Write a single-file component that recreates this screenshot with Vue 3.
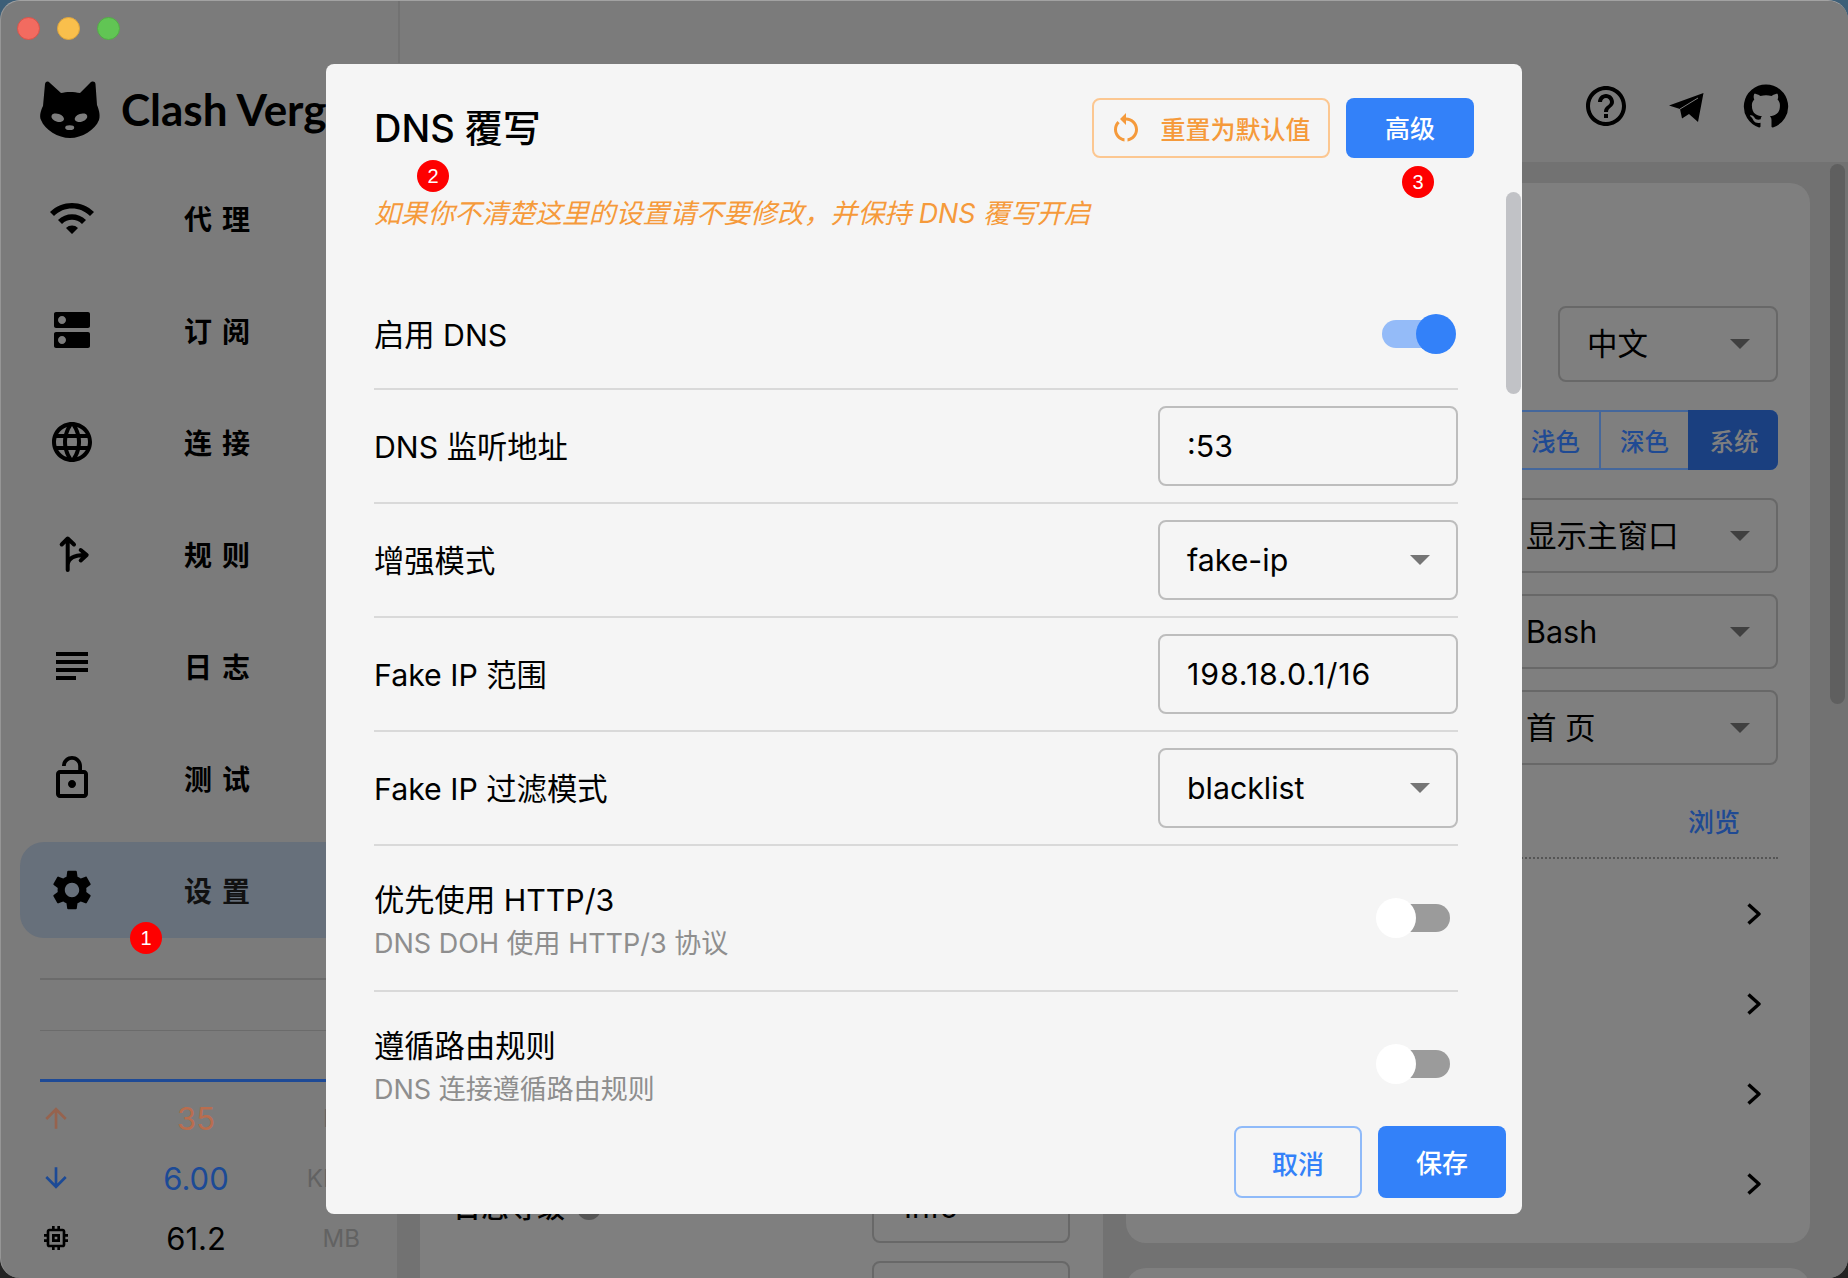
<script setup>
const navItems = [
  { label: '代理', d: 'M1 9l2 2c4.97-4.97 13.03-4.97 18 0l2-2C16.93 2.93 7.08 2.93 1 9zm8 8l3 3 3-3c-1.65-1.66-4.34-1.66-6 0zm-4-4l2 2c2.76-2.76 7.24-2.76 10 0l2-2C15.14 9.14 8.87 9.14 5 13z' },
  { label: '订阅', d: 'M20 13H4c-.55 0-1 .45-1 1v6c0 .55.45 1 1 1h16c.55 0 1-.45 1-1v-6c0-.55-.45-1-1-1zM7 19c-1.1 0-2-.9-2-2s.9-2 2-2 2 .9 2 2-.9 2-2 2zM20 3H4c-.55 0-1 .45-1 1v6c0 .55.45 1 1 1h16c.55 0 1-.45 1-1V4c0-.55-.45-1-1-1zM7 9c-1.1 0-2-.9-2-2s.9-2 2-2 2 .9 2 2-.9 2-2 2z' },
  { label: '连接', d: 'M11.99 2C6.47 2 2 6.48 2 12s4.47 10 9.99 10C17.52 22 22 17.52 22 12S17.52 2 11.99 2zm6.93 6h-2.95c-.32-1.25-.78-2.45-1.38-3.56 1.84.63 3.37 1.91 4.33 3.56zM12 4.04c.83 1.2 1.48 2.53 1.91 3.96h-3.82c.43-1.43 1.08-2.76 1.91-3.96zM4.26 14C4.1 13.36 4 12.69 4 12s.1-1.36.26-2h3.38c-.08.66-.14 1.32-.14 2 0 .68.06 1.34.14 2H4.26zm.82 2h2.95c.32 1.25.78 2.45 1.38 3.56-1.84-.63-3.37-1.9-4.33-3.56zm2.95-8H5.08c.96-1.66 2.49-2.93 4.33-3.56C8.81 5.55 8.35 6.75 8.03 8zM12 19.96c-.83-1.2-1.48-2.53-1.91-3.96h3.82c-.43 1.43-1.08 2.76-1.91 3.96zM14.34 14H9.66c-.09-.66-.16-1.32-.16-2 0-.68.07-1.35.16-2h4.68c.09.65.16 1.32.16 2 0 .68-.07 1.34-.16 2zm.25 5.56c.6-1.11 1.06-2.31 1.38-3.56h2.95c-.96 1.65-2.49 2.93-4.33 3.56zM16.36 14c.08-.66.14-1.32.14-2 0-.68-.06-1.34-.14-2h3.38c.16.64.26 1.31.26 2s-.1 1.36-.26 2h-3.38z' },
  { label: '规则', rule: true },
  { label: '日志', d: 'M14 17H4v2h10v-2zm6-8H4v2h16V9zM4 15h16v-2H4v2zM4 5v2h16V5H4z' },
  { label: '测试', d: 'M12 17c1.1 0 2-.9 2-2s-.9-2-2-2-2 .9-2 2 .9 2 2 2zm6-9h-1V6c0-2.76-2.24-5-5-5S7 3.24 7 6h1.9c0-1.71 1.39-3.1 3.1-3.1 1.71 0 3.1 1.39 3.1 3.1v2H6c-1.1 0-2 .9-2 2v10c0 1.1.9 2 2 2h12c1.1 0 2-.9 2-2V10c0-1.1-.9-2-2-2zm0 12H6V10h12v10z' },
  { label: '设置', active: true, d: 'M19.14 12.94c.04-.3.06-.61.06-.94 0-.32-.02-.64-.07-.94l2.03-1.58c.18-.14.23-.41.12-.61l-1.92-3.32c-.12-.22-.37-.29-.59-.22l-2.39.96c-.5-.38-1.03-.7-1.62-.94l-.36-2.54c-.04-.24-.24-.41-.48-.41h-3.84c-.24 0-.43.17-.47.41l-.36 2.54c-.59.24-1.13.57-1.62.94l-2.39-.96c-.22-.08-.47 0-.59.22L2.74 8.87c-.12.21-.08.47.12.61l2.03 1.58c-.05.3-.09.63-.09.94s.02.64.07.94l-2.03 1.58c-.18.14-.23.41-.12.61l1.92 3.32c.12.22.37.29.59.22l2.39-.96c.5.38 1.03.7 1.62.94l.36 2.54c.05.24.24.41.48.41h3.84c.24 0 .44-.17.47-.41l.36-2.54c.59-.24 1.13-.56 1.62-.94l2.39.96c.22.08.47 0 .59-.22l1.92-3.32c.12-.22.07-.47-.12-.61l-2.01-1.58zM12 15.6c-1.98 0-3.6-1.62-3.6-3.6s1.62-3.6 3.6-3.6 3.6 1.62 3.6 3.6-1.62 3.6-3.6 3.6z' }
]

const stats = [
  { cls: 'up', value: '35', unit: 'B/s', d: 'M4 12l1.41 1.41L11 7.83V20h2V7.83l5.58 5.59L20 12l-8-8-8 8z' },
  { cls: 'down', value: '6.00', unit: 'KB/s', d: 'M20 12l-1.41-1.41L13 16.17V4h-2v12.17l-5.58-5.59L4 12l8 8 8-8z' },
  { cls: 'mem', value: '61.2', unit: 'MB', d: 'M15 9H9v6h6V9zm-2 4h-2v-2h2v2zm8-2V9h-2V7c0-1.1-.9-2-2-2h-2V3h-2v2h-2V3H9v2H7c-1.1 0-2 .9-2 2v2H3v2h2v2H3v2h2v2c0 1.1.9 2 2 2h2v2h2v-2h2v2h2v-2h2c1.1 0 2-.9 2-2v-2h2v-2h-2v-2h2zm-4 6H7V7h10v10z' }
]

const plainRows = [
  { label: 'DNS 监听地址', value: ':53', kind: 'input' },
  { label: '增强模式', value: 'fake-ip', kind: 'select' },
  { label: 'Fake IP 范围', value: '198.18.0.1/16', kind: 'input', numeric: true },
  { label: 'Fake IP 过滤模式', value: 'blacklist', kind: 'select' }
]

const toggleRows = [
  { label: '优先使用 HTTP/3', desc: 'DNS DOH 使用 HTTP/3 协议' },
  { label: '遵循路由规则', desc: 'DNS 连接遵循路由规则' }
]

const bgSelects = ['显示主窗口', 'Bash', '首 页']
const themeButtons = ['跟随', '浅色', '深色', '系统']
</script>

<template>
  <div class="desktop">
    <div class="window">
      <aside class="sidebar">
        <div class="logo">
          <svg class="cat" viewBox="0 0 80 80" width="80" height="80">
            <path d="M15 14C16 11 18 11 20 13L31 23C36 21.5 44 21.5 50 23L60 13C62 11 65 11 65.5 14L67 35C70 42 70 47 69 50C65 60 52 68 40 68C28 68 15 60 11 50C9 46 11 40 13 36Z" fill="#000" />
            <ellipse cx="27.7" cy="47.7" rx="6.5" ry="4" transform="rotate(18 27.7 47.7)" fill="#7d7d7d" />
            <ellipse cx="51" cy="47.7" rx="6.5" ry="4" transform="rotate(-18 51 47.7)" fill="#7d7d7d" />
            <ellipse cx="39.7" cy="57.7" rx="4.5" ry="2.4" fill="#7d7d7d" />
          </svg>
          <span class="brand">Clash Verge</span>
        </div>

        <nav class="nav">
          <div v-for="item in navItems" :key="item.label" class="nav-item" :class="{ active: item.active }">
            <svg v-if="item.rule" class="nav-icon" viewBox="0 0 48 48">
              <path d="M19.700 40V9M13.700 14.500L19.700 8.500L26 14.500M19.700 35C20 29 25 25 37 25M32.700 20L38.700 25L32.700 30.500" fill="none" stroke="#000" stroke-width="4" stroke-linecap="round" stroke-linejoin="round" />
            </svg>
            <svg v-else class="nav-icon" viewBox="0 0 24 24"><path :d="item.d" /></svg>
            <span class="nav-label">{{ item.label }}</span>
          </div>
        </nav>

        <div class="graph">
          <div class="graph-line"></div>
          <div class="graph-line"></div>
          <div class="graph-base"></div>
        </div>

        <div class="stats">
          <div v-for="s in stats" :key="s.unit" class="stat" :class="s.cls">
            <svg class="stat-icon" viewBox="0 0 24 24"><path :d="s.d" /></svg>
            <span class="stat-value">{{ s.value }}</span>
            <span class="stat-unit">{{ s.unit }}</span>
          </div>
        </div>
      </aside>

      <main class="main">
        <header class="topbar">
          <svg class="top-icon" viewBox="0 0 24 24"><path d="M11 18h2v-2h-2v2zm1-16C6.48 2 2 6.48 2 12s4.48 10 10 10 10-4.48 10-10S17.52 2 12 2zm0 18c-4.41 0-8-3.59-8-8s3.59-8 8-8 8 3.59 8 8-3.59 8-8 8zm0-14c-2.21 0-4 1.790-4 4h2c0-1.100.9-2 2-2s2 .9 2 2c0 2-3 1.750-3 5h2c0-2.250 3-2.500 3-5 0-2.210-1.790-4-4-4z" /></svg>
          <svg class="top-icon" viewBox="92 11 48 48"><path d="M133.500 22L99 34.500L110 38L112 47.500L119 43L128 51Z" /><path d="M110 38L128 27" stroke="#7d7d7d" stroke-width="1" /></svg>
          <svg class="top-icon" viewBox="0 0 24 24"><path d="M12 1.270a11 11 0 00-3.480 21.460c.55.09.73-.28.73-.55v-1.840c-3.030.64-3.670-1.460-3.670-1.460-.55-1.290-1.280-1.650-1.280-1.650-.92-.65.1-.65.1-.65 1.100 0 1.730 1.100 1.730 1.100.92 1.650 2.570 1.200 3.210.92a2 2 0 01.64-1.470c-2.470-.27-5.040-1.190-5.040-5.500 0-1.100.46-2.100 1.200-2.840a3.760 3.760 0 010-2.930s.91-.28 3.110 1.100c1.800-.49 3.700-.49 5.500 0 2.100-1.380 3.020-1.100 3.020-1.100a3.760 3.760 0 010 2.930c.83.74 1.200 1.740 1.200 2.940 0 4.210-2.570 5.130-5.040 5.400.45.37.82.92.82 2.020v3.030c0 .27.1.64.73.55A11 11 0 0012 1.270" /></svg>
        </header>

        <div class="content">
          <section class="card card-left">
            <div class="bg-row">
              <span class="bg-row-label">日志等级</span>
              <span class="bg-help"></span>
              <span class="bg-select-left">Info</span>
            </div>
            <div class="bg-row bg-row-next"><span class="bg-select-left"></span></div>
          </section>

          <div class="right-col">
            <section class="card card-right">
              <div class="bg-select lang">中文<i class="caret dark"></i></div>
              <div class="theme-group">
                <span v-for="(t, i) in themeButtons" :key="t" class="theme-btn" :class="{ on: i === 3 }">{{ t }}</span>
              </div>
              <div v-for="s in bgSelects" :key="s" class="bg-select wide">{{ s }}<i class="caret dark"></i></div>
              <span class="browse">浏览</span>
              <div class="dotted"></div>
              <div v-for="n in 4" :key="n" class="chevron-row">
                <svg width="14" height="24" viewBox="0 0 14 24"><path d="M1.500 2.500L12 12L1.500 21.500" fill="none" stroke="#000" stroke-width="3.400" stroke-linejoin="round" /></svg>
              </div>
            </section>
            <section class="card card-next"></section>
          </div>
        </div>
      </main>

      <div class="scroll-thumb"></div>

      <div class="dialog">
        <div class="dialog-head">
          <h2 class="dialog-title">DNS 覆写</h2>
          <div class="head-actions">
            <button class="btn btn-reset">
              <svg class="reset-icon" viewBox="0 0 24 24"><path d="M12 5V2L8 6l4 4V7c3.310 0 6 2.690 6 6 0 2.970-2.160 5.430-5 5.910v2.020c3.950-.49 7-3.850 7-7.930 0-4.420-3.580-8-8-8zm-6 8c0-1.650.67-3.150 1.760-4.240L6.340 7.340C4.900 8.790 4 10.790 4 13c0 4.080 3.050 7.440 7 7.930v-2.020c-2.840-.48-5-2.940-5-5.910z" /></svg>
              重置为默认值
            </button>
            <button class="btn btn-primary btn-adv">高级</button>
          </div>
        </div>
        <p class="hint">如果你不清楚这里的设置请不要修改，并保持 DNS 覆写开启</p>

        <div class="dialog-body">
          <div class="row row-first">
            <span class="row-label">启用 DNS</span>
            <span class="switch on"><i class="track"></i><i class="knob"></i></span>
          </div>
          <div v-for="r in plainRows" :key="r.label" class="row">
            <span class="row-label">{{ r.label }}</span>
            <div class="field" :class="{ numeric: r.numeric }">
              {{ r.value }}
              <i v-if="r.kind === 'select'" class="caret"></i>
            </div>
          </div>
          <div v-for="r in toggleRows" :key="r.label" class="row row-tall">
            <div class="row-text">
              <div class="row-label">{{ r.label }}</div>
              <div class="row-desc">{{ r.desc }}</div>
            </div>
            <span class="switch"><i class="track"></i><i class="knob"></i></span>
          </div>
        </div>

        <div class="dialog-foot">
          <button class="btn btn-cancel">取消</button>
          <button class="btn btn-primary btn-save">保存</button>
        </div>

        <div class="dialog-thumb"></div>
      </div>

      <div class="lights">
        <i class="light red"></i>
        <i class="light yellow"></i>
        <i class="light green"></i>
      </div>

      <span class="badge b1">1</span>
      <span class="badge b2">2</span>
      <span class="badge b3">3</span>
    </div>
  </div>
</template>

<style>
html, body { margin: 0; padding: 0; overflow: hidden; }
</style>

<style scoped>
.desktop {
  width: 1848px;
  height: 1278px;
  background: linear-gradient(180deg, #3d5f78 0%, #3d5f78 50%, #232323 50%, #232323 100%);
  font-family: Inter, "Noto Sans CJK SC", sans-serif;
  color: #000;
}
.window {
  position: relative;
  width: 1848px;
  height: 1278px;
  display: flex;
  overflow: hidden;
  border-radius: 20px;
  background: #7b7b7b;
  box-sizing: border-box;
  border-top: 1px solid #a2a2a2;
  border-left: 1px solid #969696;
}

/* sidebar */
.sidebar {
  width: 396px;
  flex: none;
  overflow: hidden;
  box-sizing: border-box;
}
.logo {
  display: flex;
  align-items: center;
  height: 80px;
  margin-top: 69px;
  padding-left: 29px;
  gap: 11px;
}
.cat { flex: none; }
.brand {
  font-family: Lato, sans-serif;
  font-weight: 700;
  font-size: 44px;
  line-height: 74px;
  height: 76px;
  white-space: nowrap;
}
.nav {
  display: flex;
  flex-direction: column;
  gap: 16px;
  margin-top: 20px;
  padding-left: 19px;
}
.nav-item {
  display: flex;
  align-items: center;
  height: 96px;
  padding-left: 28px;
  border-radius: 24px;
}
.nav-item.active { background: #67707b; }
.nav-icon { width: 48px; height: 48px; flex: none; }
.nav-label {
  margin-left: 88px;
  font-size: 28px;
  font-weight: 700;
  letter-spacing: 10px;
  color: #000;
}
.nav-item.active .nav-label { color: #111; }
.graph {
  margin: 40px 0 0 39px;
  height: 104px;
  display: flex;
  flex-direction: column;
  justify-content: flex-start;
}
.graph-line { height: 2px; background: #6b6b6b; margin-bottom: 50px; }
.graph-base { height: 3px; background: #1e4a96; margin-top: -2px; }
.stats {
  padding-left: 39px;
  margin-top: 6px;
}
.stat {
  display: grid;
  grid-template-columns: 32px 248px 40px;
  align-items: center;
  height: 60px;
}
.stat-icon { width: 32px; height: 32px; fill: currentColor; }
.stat-value { text-align: center; font-size: 31px; }
.stat-unit {
  display: flex;
  justify-content: flex-end;
  white-space: nowrap;
  font-size: 24px;
  color: #626262;
}
.up { color: #96634e; }
.up .stat-value { color: #b96d4e; }
.down { color: #1c4a96; }
.mem { color: #000; }

/* main */
.main {
  flex: 1;
  min-width: 0;
  display: flex;
  flex-direction: column;
  position: relative;
}
.main::before {
  content: "";
  position: absolute;
  left: 1px;
  top: 0;
  width: 2px;
  height: 62px;
  background: #727272;
}
.topbar {
  height: 161px;
  flex: none;
  box-sizing: border-box;
  display: flex;
  justify-content: flex-end;
  align-items: flex-start;
  gap: 32px;
  padding: 81px 58px 0 0;
  background: #7b7b7b;
}
.top-icon { width: 48px; height: 48px; fill: #000; }
.content {
  flex: 1;
  min-height: 0;
  background: #727272;
  display: flex;
  gap: 23px;
  padding: 21px 0 0 23px;
  overflow: hidden;
}
.card {
  background: #7f7f7f;
  border-radius: 20px;
  box-sizing: border-box;
}
.card-left {
  width: 683px;
  height: 1200px;
  padding: 983px 33px 0 33px;
  flex: none;
}
.bg-row {
  display: flex;
  align-items: center;
  gap: 12px;
  height: 76px;
  margin-bottom: 20px;
}
.bg-row-label { font-size: 28px; font-weight: 500; padding-top: 4px; }
.bg-help { width: 24px; height: 24px; margin-top: 8px; border-radius: 50%; background: #555; }
.bg-select-left {
  box-sizing: border-box;
  width: 198px;
  height: 78px;
  margin-left: auto;
  border: 2px solid #686868;
  border-radius: 8px;
  padding: 22px 30px 0;
  font-size: 30px;
}
.right-col {
  width: 684px;
  flex: none;
  display: flex;
  flex-direction: column;
  gap: 25px;
}
.card-right {
  height: 1060px;
  flex: none;
  padding: 123px 32px 0 33px;
  display: flex;
  flex-direction: column;
  align-items: flex-end;
}
.card-next { height: 200px; flex: none; }
.bg-select {
  position: relative;
  box-sizing: border-box;
  display: flex;
  align-items: center;
  height: 75px;
  border: 2px solid #686868;
  border-radius: 8px;
  font-size: 30.500px;
  padding-left: 27px;
  line-height: 1;
}
.lang { width: 220px; height: 76px; }
.wide { width: 278px; margin-top: 21px; padding-left: 24px; padding-top: 2px; }
.theme-group + .wide { margin-top: 28px; }
.theme-group {
  display: flex;
  justify-content: flex-end;
  margin-top: 28px;
  height: 60px;
  width: 337px;
  box-sizing: border-box;
  border: 2px solid #44679c;
  border-radius: 8px;
}
.theme-btn {
  flex: none;
  width: 87px;
  display: flex;
  align-items: center;
  justify-content: center;
  font-size: 24.500px;
  font-weight: 500;
  color: #1f4a93;
  border-left: 2px solid #44679c;
}
.theme-btn:first-child { border-left: 0; }
.theme-btn.on {
  width: 88px;
  background: #1a3f7f;
  color: #7f7f7f;
  margin: -2px -2px -2px 0;
  border-radius: 0 8px 8px 0;
  border-left-color: #1a3f7f;
}
.browse {
  margin-top: 38px;
  margin-right: 38px;
  font-size: 26px;
  font-weight: 500;
  line-height: 40px;
  color: #1f4a93;
}
.dotted {
  width: 500px;
  margin-top: 14px;
  border-top: 2px dotted #555;
}
.chevron-row {
  height: 90px;
  flex: none;
  display: flex;
  align-items: center;
  padding-right: 17px;
}
.dotted + .chevron-row { margin-top: 10px; }
.caret {
  position: absolute;
  right: 26px;
  top: 50%;
  margin-top: -5px;
  width: 0;
  height: 0;
  border-left: 10px solid transparent;
  border-right: 10px solid transparent;
  border-top: 10px solid #757575;
}
.caret.dark { border-top-color: #404040; }
.scroll-thumb {
  position: absolute;
  left: 1829px;
  top: 163px;
  width: 15px;
  height: 540px;
  border-radius: 8px;
  background: #5f5f5f;
}

/* dialog */
.dialog {
  position: absolute;
  left: 325px;
  top: 63px;
  width: 1196px;
  height: 1150px;
  background: #f5f5f5;
  border-radius: 8px;
  display: flex;
  flex-direction: column;
  overflow: hidden;
}
.dialog-head {
  display: flex;
  justify-content: space-between;
  align-items: center;
  padding: 34px 48px 0;
  flex: none;
}
.dialog-title {
  margin: 0;
  padding-bottom: 5px;
  font-size: 38px;
  font-weight: 500;
  color: #000;
}
.head-actions { display: flex; gap: 16px; }
.btn {
  box-sizing: border-box;
  font-family: inherit;
  border-radius: 8px;
  padding: 0;
  display: flex;
  align-items: center;
  justify-content: center;
}
.btn-reset {
  width: 238px;
  height: 60px;
  background: transparent;
  border: 2px solid #fcc791;
  color: #f59a3b;
  font-size: 25px;
  font-weight: 500;
  gap: 16px;
}
.reset-icon { width: 36px; height: 36px; fill: #f59a3b; margin-left: -3px; }
.btn-primary {
  background: #3381f9;
  border: 0;
  color: #fff;
  font-weight: 500;
}
.btn-adv { width: 128px; height: 60px; font-size: 25px; padding-bottom: 2px; }
.hint {
  margin: 35px 0 0;
  padding-left: 48px;
  font-size: 26.870px;
  line-height: 40px;
  font-style: italic;
  color: #f59a3b;
  flex: none;
}
.dialog-body {
  flex: 1;
  min-height: 0;
  overflow: hidden;
  margin: 47px 64px 0 48px;
}
.row {
  display: flex;
  align-items: center;
  justify-content: space-between;
  box-sizing: border-box;
  height: 114px;
  border-bottom: 2px solid #d9d9d9;
}
.row-first { height: 110px; }
.row-tall { height: 146px; }
.row-tall:last-child { border-bottom-color: transparent; }
.row-label { font-size: 30.300px; line-height: 44px; color: #000; }
.row > .row-label { padding-top: 2px; }
.row-text { padding-top: 7px; }
.row-desc { font-size: 27px; line-height: 44px; color: #8e8e8e; }
.field {
  position: relative;
  box-sizing: border-box;
  width: 300px;
  height: 80px;
  border: 2px solid #bdbdbd;
  border-radius: 8px;
  display: flex;
  align-items: center;
  padding-left: 27px;
  font-size: 30.300px;
}
.field.numeric { letter-spacing: 0.9px; }
.switch {
  position: relative;
  display: block;
  width: 80px;
  height: 40px;
  margin-right: 2px;
  flex: none;
}
.track {
  position: absolute;
  left: 6px;
  top: 6px;
  width: 68px;
  height: 28px;
  border-radius: 14px;
  background: #9b9b9b;
}
.knob {
  position: absolute;
  left: 0;
  top: 0;
  width: 40px;
  height: 40px;
  border-radius: 50%;
  background: #fff;
}
.switch.on .track { background: #94bbf8; }
.switch.on .knob { left: 40px; background: #3381f9; }
.dialog-foot {
  flex: none;
  display: flex;
  justify-content: flex-end;
  gap: 16px;
  padding: 16px 16px 16px 0;
}
.btn-cancel {
  width: 128px;
  height: 72px;
  background: transparent;
  border: 2px solid #8fbaf9;
  color: #3381f9;
  font-size: 26px;
  font-weight: 500;
}
.btn-save { width: 128px; height: 72px; font-size: 26px; padding-bottom: 2px; }
.dialog-thumb {
  position: absolute;
  left: 1180px;
  top: 128px;
  width: 15px;
  height: 202px;
  border-radius: 8px;
  background: #c1c2c6;
}

/* window controls */
.lights {
  position: absolute;
  left: 16px;
  top: 16px;
  display: flex;
  gap: 17px;
}
.light {
  width: 23px;
  height: 23px;
  border-radius: 50%;
  box-sizing: border-box;
}
.red { background: #f26b60; border: 1px solid #d9534a; }
.yellow { background: #f9bf4c; border: 1px solid #dfa53c; }
.green { background: #61c554; border: 1px solid #52ac46; }

/* annotation badges */
.badge {
  position: absolute;
  width: 32px;
  height: 32px;
  border-radius: 50%;
  background: #fe0000;
  color: #fff;
  font-family: "Liberation Sans", sans-serif;
  font-size: 20px;
  line-height: 32px;
  text-align: center;
}
.b1 { left: 129px; top: 921px; }
.b2 { left: 416px; top: 159px; }
.b3 { left: 1401px; top: 165px; }
</style>
